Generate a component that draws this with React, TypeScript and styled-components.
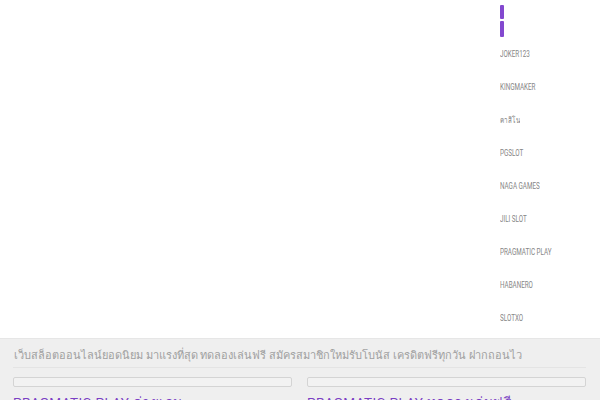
import React, {FC} from 'react';
import styled, {createGlobalStyle} from "styled-components";

const GlobalStyle = createGlobalStyle`
  html, body {
    margin: 0;
    padding: 0;
    background: #ffffff;
    font-family: Roboto, "Noto Sans", sans-serif;
  }
`

export const Page = styled.div`
  width: 600px;
  overflow: hidden;
`
export const Header = styled.div`
  height: 338px;
  display: grid;
  grid-template-columns: 500px 100px;
`
export const Main = styled.div``
export const Aside = styled.nav`
  display: flex;
  flex-direction: column;
`
export const Toggle = styled.div`
  margin-top: 5px;
  width: 4px;
  height: 32px;
  display: flex;
  flex-direction: column;
  gap: 2px;
`
export const ToggleBar = styled.span<{ $h: number }>`
  display: block;
  height: ${p => p.$h}px;
  background: #8348cf;
  border-radius: 1px;
`
export const MenuList = styled.ul`
  list-style: none;
  margin: 0;
  padding: 0;
`
export const MenuItem = styled.li`
  height: 33px;
  display: flex;
  align-items: center;
  white-space: nowrap;
`
export const MenuLabel = styled.span`
  display: inline-block;
  font-family: Roboto, sans-serif;
  font-weight: 400;
  font-size: 8.5px;
  line-height: 10px;
  color: #858585;
  text-transform: uppercase;
  transform: scaleX(0.74);
  transform-origin: left center;
`
export const Footer = styled.div`
  background: #efefef;
  border-top: 1px solid #e6e6e6;
  padding: 8px 14px 0 13px;
  height: 62px;
`
export const Heading = styled.div`
  font-size: 11px;
  line-height: 18px;
  color: #a0a0a0;
  padding-left: 1px;
  padding-bottom: 2px;
  border-bottom: 1px solid #e4e4e4;
  white-space: nowrap;
  overflow: hidden;
`
export const Columns = styled.div`
  display: grid;
  grid-template-columns: 279px 279px;
  gap: 15px;
  margin-top: 9px;
`
export const Column = styled.div``
export const Bar = styled.div`
  height: 8px;
  border: 1px solid #d4d4d4;
  background: #f2f2f2;
  border-radius: 2px;
`
export const Provider = styled.div`
  margin-top: 4px;
  font-size: 13.5px;
  font-weight: 400;
  color: #7b3fc4;
  letter-spacing: 0.4px;
  white-space: nowrap;
`

const menu = ["JOKER123", "KINGMAKER", "คาสิโน", "PGSLOT", "NAGA GAMES", "JILI SLOT", "PRAGMATIC PLAY", "HABANERO", "SLOTXO"]

const App: FC = () => {
    return (
        <Page>
            <GlobalStyle/>
            <Header>
                <Main/>
                <Aside>
                    <Toggle>
                        <ToggleBar $h={14}/>
                        <ToggleBar $h={16}/>
                    </Toggle>
                    <MenuList>
                        {menu.map((m) => (
                            <MenuItem key={m}><MenuLabel>{m}</MenuLabel></MenuItem>
                        ))}
                    </MenuList>
                </Aside>
            </Header>
            <Footer>
                <Heading>เว็บสล็อตออนไลน์ยอดนิยม มาแรงที่สุด ทดลองเล่นฟรี สมัครสมาชิกใหม่รับโบนัส เครดิตฟรีทุกวัน ฝากถอนไว</Heading>
                <Columns>
                    <Column>
                        <Bar/>
                        <Provider>PRAGMATIC PLAY ค่ายเกม</Provider>
                    </Column>
                    <Column>
                        <Bar/>
                        <Provider>PRAGMATIC PLAY ทดลองเล่นฟรี</Provider>
                    </Column>
                </Columns>
            </Footer>
        </Page>
    );
};

export default App;
